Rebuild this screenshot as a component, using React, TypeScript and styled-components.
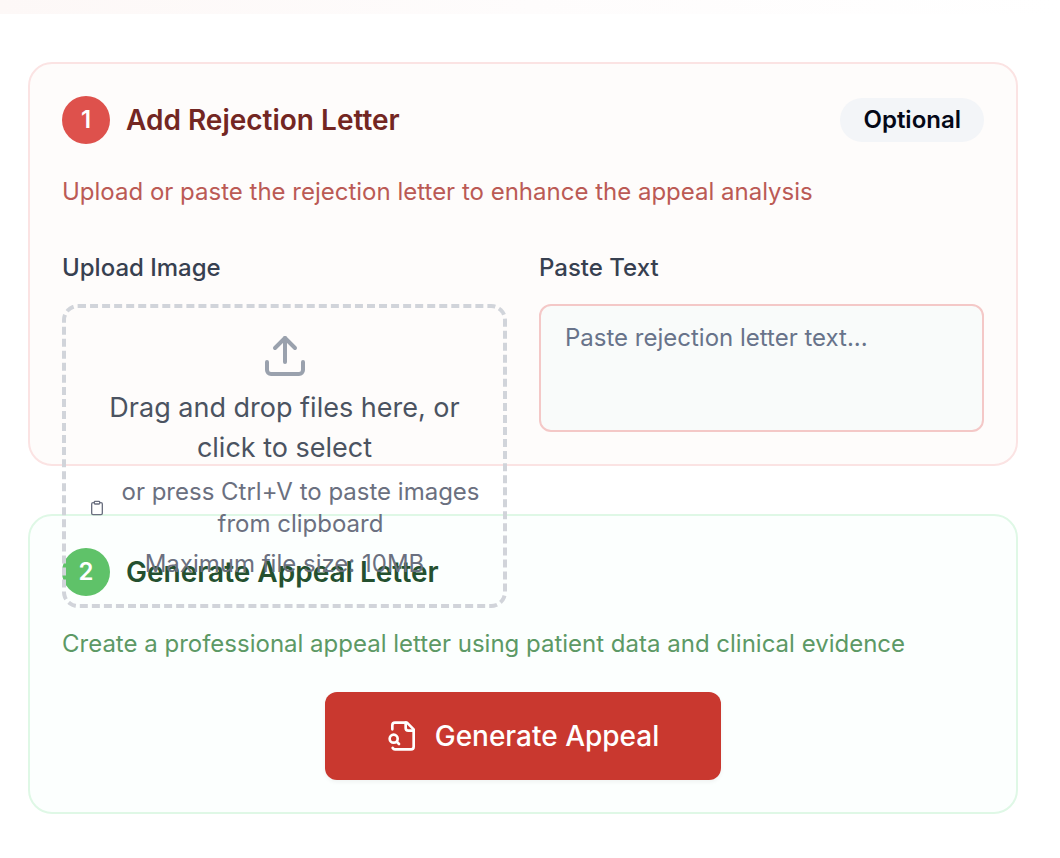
import React from "react";
import styled, { createGlobalStyle } from "styled-components";
import { Clipboard, Upload } from "lucide-react";

const GlobalStyle = createGlobalStyle`
  *, *::before, *::after { box-sizing: border-box; }
  body {
    margin: 0;
    background: #ffffff;
    font-family: Inter, "Liberation Sans", sans-serif;
    font-size: 24px;
    line-height: 32px;
  }
  h2, p { margin: 0; }
`;

type Tone = "red" | "green";

const tones = {
  red: { border: "#fbe3e3", bg: "#fefcfb", step: "#de514c", title: "#732622", text: "#bb5a55" },
  green: { border: "#dff8e6", bg: "#fcfffe", step: "#5fc269", title: "#24502f", text: "#5c9965" },
};

const TopBand = styled.header`
  height: 14px;
  background: linear-gradient(to right, #fdf8f7, #fefcfc 50%, #ffffff);
`;

const Main = styled.main`
  display: flex;
  flex-direction: column;
  gap: 48px;
  padding: 48px 42px 44px 28px;
`;

const Card = styled.section<{ $tone: Tone }>`
  display: flex;
  flex-direction: column;
  gap: 32px;
  padding: 32px;
  border: 2px solid ${(p) => tones[p.$tone].border};
  border-radius: 24px;
  background: ${(p) => tones[p.$tone].bg};
`;

const CardHeader = styled.div`
  display: flex;
  align-items: center;
  gap: 16px;
`;

const Step = styled.span<{ $tone: Tone }>`
  display: flex;
  align-items: center;
  justify-content: center;
  width: 48px;
  height: 48px;
  border-radius: 50%;
  background: ${(p) => tones[p.$tone].step};
  color: #ffffff;
  font-weight: 600;
`;

const Title = styled.h2<{ $tone: Tone }>`
  color: ${(p) => tones[p.$tone].title};
  font-size: 28px;
  line-height: 40px;
  font-weight: 600;
`;

const Badge = styled.span`
  margin-left: auto;
  padding: 6px 23px;
  border-radius: 22px;
  background: #f3f5f8;
  color: #040817;
  font-weight: 600;
`;

const Description = styled.p<{ $tone: Tone }>`
  color: ${(p) => tones[p.$tone].text};
`;

const Fields = styled.div`
  display: grid;
  grid-template-columns: 1fr 1fr;
  gap: 32px;
  padding-top: 16px;
`;

const Field = styled.div`
  display: flex;
  flex-direction: column;
  gap: 24px;
  min-width: 0;
`;

const FieldLabel = styled.label`
  color: #374050;
  line-height: 24px;
  font-weight: 500;
`;

/* Same height as the text area; the drop zone is allowed to spill out of it. */
const DropSlot = styled.div`
  height: 128px;
`;

const DropZone = styled.label`
  position: relative;
  display: flex;
  flex-direction: column;
  align-items: center;
  gap: 8px;
  padding: 24px;
  border: 4px dashed #d1d4da;
  border-radius: 16px;
  color: #6b7080;
  text-align: center;
  cursor: pointer;
`;

const DropTitle = styled.span`
  color: #4b5361;
  font-size: 27px;
  line-height: 40px;
`;

const PasteHint = styled.span`
  display: flex;
  align-items: center;
  gap: 16px;
  white-space: nowrap;

  svg { flex-shrink: 0; }
`;

const FileInput = styled.input`
  position: absolute;
  width: 1px;
  height: 1px;
  opacity: 0;
`;

const TextArea = styled.textarea`
  display: block;
  width: 100%;
  height: 128px;
  padding: 16px 24px;
  border: 2px solid #f4c8c7;
  border-radius: 12px;
  outline: none;
  resize: none;
  background: #f9fbfa;
  color: #040817;
  font: inherit;

  &::placeholder { color: #68738a; opacity: 1; }
`;

const GenerateButton = styled.button`
  display: flex;
  align-items: center;
  align-self: center;
  gap: 16px;
  padding: 24px 62px;
  border: 0;
  border-radius: 12px;
  background: #c9382f;
  box-shadow: 0 2px 4px rgba(0, 0, 0, 0.05);
  color: #ffffff;
  font: inherit;
  font-size: 28px;
  line-height: 40px;
  font-weight: 500;
  cursor: pointer;
`;

const FileSearchIcon = () => (
  <svg width="32" height="32" viewBox="0 0 24 24" fill="none" stroke="currentColor" strokeWidth="2" strokeLinecap="round" strokeLinejoin="round" aria-hidden="true">
    <path d="M14 2v4a2 2 0 0 0 2 2h4" />
    <path d="M4.268 21a2 2 0 0 0 1.727 1H18a2 2 0 0 0 2-2V7l-5-5H6a2 2 0 0 0-2 2v3" />
    <path d="m9 18-1.5-1.5" />
    <circle cx="5" cy="14" r="3" />
  </svg>
);

export default function App() {
  return (
    <>
      <GlobalStyle />
      <TopBand />
      <Main>
        <Card $tone="red">
          <CardHeader>
            <Step $tone="red">1</Step>
            <Title $tone="red">Add Rejection Letter</Title>
            <Badge>Optional</Badge>
          </CardHeader>
          <Description $tone="red">Upload or paste the rejection letter to enhance the appeal analysis</Description>
          <Fields>
            <Field>
              <FieldLabel htmlFor="letter-image">Upload Image</FieldLabel>
              <DropSlot>
                <DropZone>
                  <FileInput id="letter-image" type="file" accept="image/*" />
                  <Upload size={48} color="#9aa1ad" />
                  <DropTitle>Drag and drop files here, or click to select</DropTitle>
                  <PasteHint>
                    <Clipboard size={16} />
                    <span>
                      or press Ctrl+V to paste images
                      <br />
                      from clipboard
                    </span>
                  </PasteHint>
                  <span>Maximum file size: 10MB</span>
                </DropZone>
              </DropSlot>
            </Field>
            <Field>
              <FieldLabel htmlFor="letter-text">Paste Text</FieldLabel>
              <TextArea id="letter-text" placeholder="Paste rejection letter text..." />
            </Field>
          </Fields>
        </Card>
        <Card $tone="green">
          <CardHeader>
            <Step $tone="green">2</Step>
            <Title $tone="green">Generate Appeal Letter</Title>
          </CardHeader>
          <Description $tone="green">Create a professional appeal letter using patient data and clinical evidence</Description>
          <GenerateButton type="button">
            <FileSearchIcon />
            Generate Appeal
          </GenerateButton>
        </Card>
      </Main>
    </>
  );
}
